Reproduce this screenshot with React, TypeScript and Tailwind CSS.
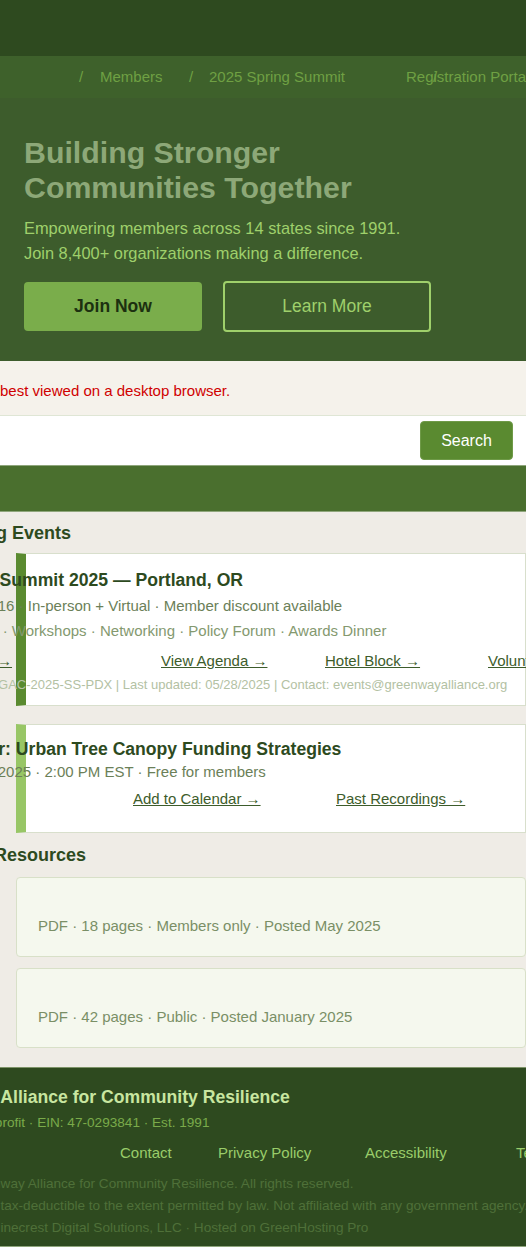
export default function App() {
  return (
    <div className="w-full overflow-hidden font-['Liberation_Sans',Arial,sans-serif] bg-[#efece6]">
      {/* top header */}
      <div className="h-14 bg-[#2e4a1f]" />

      {/* breadcrumb */}
      <nav className="flex h-[42px] items-center whitespace-nowrap bg-[#3e612b] text-[15px] text-[#6fa043]">
        <span className="w-[79px] shrink-0" />
        <span className="w-[21px] shrink-0">/</span>
        <span className="w-[89px] shrink-0">Members</span>
        <span className="w-[20px] shrink-0">/</span>
        <span className="w-[197px] shrink-0">2025 Spring Summit</span>
        <span className="relative shrink-0">
          Registration Portal
          <span className="absolute left-[27px] top-0">/</span>
        </span>
      </nav>

      {/* hero */}
      <section className="bg-[#3d5c2c] px-6 pt-[37px] pb-[29px]">
        <h1 className="text-[30.3px] font-bold leading-[35px] text-[#8da878]">
          Building Stronger
          <br />
          Communities Together
        </h1>
        <p className="mt-[11px] text-[16.4px] leading-[25px] text-[#9fd06b]">
          Empowering members across 14 states since 1991.
          <br />
          Join 8,400+ organizations making a difference.
        </p>
        <div className="mt-[15px] flex items-center gap-[21px]">
          <button className="h-[49px] w-[178px] rounded-[4px] bg-[#7aad4b] text-[17.5px] font-bold text-[#1c3010]">
            Join Now
          </button>
          <button className="h-[51px] w-[208px] rounded-[4px] border-2 border-[#9fd06b] text-[17.5px] text-[#9fd06b]">
            Learn More
          </button>
        </div>
      </section>

      {/* notice */}
      <div className="whitespace-nowrap border-b border-[#dfe6d5] bg-[#f5f2eb] pt-[20px] pb-[14px] text-[15px] leading-[20px] text-[#d00000]">
        <span className="ml-[-75px] inline-block">This site is best viewed on a desktop browser.</span>
      </div>

      {/* search */}
      <div className="flex h-[49px] items-center justify-end bg-white pr-[13px]">
        <button className="h-[39px] w-[93px] rounded-[4px] border border-[#6f9a48] bg-[#5a8a30] text-[16px] text-white">
          Search
        </button>
      </div>

      {/* nav bar */}
      <div className="h-[47px] border-y border-[#8fa67c] bg-[#4a6f2e]" />

      {/* main */}
      <main className="whitespace-nowrap pt-[10px] pb-[19px]">
        <h2 className="ml-[-81px] text-[18px] font-bold leading-[22px] text-[#2d4a1e]">
          Upcoming Events
        </h2>

        <div className="mt-[9px] ml-4 border border-[#d8dfcc] border-l-[10px] border-l-[#5a8a30] bg-white pt-[15px] pb-[10px]">
          <div className="ml-[-90px]">
            <div className="ml-[3px] text-[17.6px] font-bold leading-[22px] text-[#2d4a1e]">
              Spring Summit 2025 — Portland, OR
            </div>
            <div className="mt-[2px] text-[15px] leading-[25px] text-[#6b8058]">
              June 14–16 · In-person + Virtual · Member discount available
            </div>
            <div className="text-[15px] leading-[25px] text-[#84996f]">
              Keynotes · Workshops · Networking · Policy Forum · Awards Dinner
            </div>
            <div className="mt-[5px] flex text-[15px] leading-[25px] text-[#3d5c2b] underline">
              <span className="w-[225px] shrink-0">
                <span className="ml-[1px]">Register →</span>
              </span>
              <span className="w-[164px] shrink-0">View Agenda →</span>
              <span className="w-[163px] shrink-0">Hotel Block →</span>
              <span className="shrink-0">Volunteer →</span>
            </div>
            <div className="mt-[2px] ml-[5px] text-[13px] leading-[20px] text-[#b3c1a3]">
              Event ID: GAC-2025-SS-PDX | Last updated: 05/28/2025 | Contact: events@greenwayalliance.org
            </div>
          </div>
        </div>

        <div className="mt-[18px] ml-4 border border-[#d8dfcc] border-l-[10px] border-l-[#98c666] bg-white pt-[13px] pb-[21px]">
          <div className="ml-[-90px]">
            <div className="text-[17.6px] font-bold leading-[22px] text-[#2d4a1e]">
              Webinar: Urban Tree Canopy Funding Strategies
            </div>
            <div className="mt-[1px] text-[15px] leading-[22px] text-[#6b8058]">
              June 24, 2025 · 2:00 PM EST · Free for members
            </div>
            <div className="mt-[3px] flex text-[15px] leading-[25px] text-[#3d5c2b] underline">
              <span className="w-[197px] shrink-0" />
              <span className="w-[203px] shrink-0">Add to Calendar →</span>
              <span className="shrink-0">Past Recordings →</span>
            </div>
          </div>
        </div>

        <h2 className="mt-[11px] ml-[-80px] text-[18px] font-bold leading-[22px] text-[#2d4a1e]">
          Member Resources
        </h2>

        <div className="mt-[11px] ml-4 rounded-[4px] border border-[#d8e0c8] bg-[#f5f8ee] px-[21px] pt-[37px] pb-[19px]">
          <div className="text-[15px] leading-[22px] text-[#7a8f66]">
            PDF · 18 pages · Members only · Posted May 2025
          </div>
        </div>
        <div className="mt-[11px] ml-4 rounded-[4px] border border-[#d8e0c8] bg-[#f5f8ee] px-[21px] pt-[37px] pb-[19px]">
          <div className="text-[15px] leading-[22px] text-[#7a8f66]">
            PDF · 42 pages · Public · Posted January 2025
          </div>
        </div>
      </main>

      {/* footer */}
      <footer className="whitespace-nowrap border-y border-t-[#7d9368] border-b-[#8fa67c] bg-[#2e4a1f] pt-[18px] pb-[7px]">
        <div className="ml-[-85px]">
          <div className="ml-[-3px] text-[17.6px] font-bold leading-[22px] text-[#c8e6a0]">
            Greenway Alliance for Community Resilience
          </div>
          <div className="mt-[5px] ml-[-4px] text-[13.6px] leading-[20px] text-[#7aab4a]">
            501(c)(3) Nonprofit · EIN: 47-0293841 · Est. 1991
          </div>
          <div className="mt-[9px] flex text-[15px] leading-[22px] text-[#9acd6a]">
            <span className="w-[205px] shrink-0" />
            <span className="w-[98px] shrink-0">Contact</span>
            <span className="w-[147px] shrink-0">Privacy Policy</span>
            <span className="w-[151px] shrink-0">Accessibility</span>
            <span className="shrink-0">Terms of Use</span>
          </div>
          <div className="mt-[9px] text-[13.6px] leading-[22px] text-[#4f7039]">
            <div>© 2025 Greenway Alliance for Community Resilience. All rights reserved.</div>
            <div className="ml-[-3px]">Donations are tax-deductible to the extent permitted by law. Not affiliated with any government agency.</div>
            <div className="ml-[-3px]">Designed by Pinecrest Digital Solutions, LLC · Hosted on GreenHosting Pro</div>
          </div>
        </div>
      </footer>
    </div>
  );
}
